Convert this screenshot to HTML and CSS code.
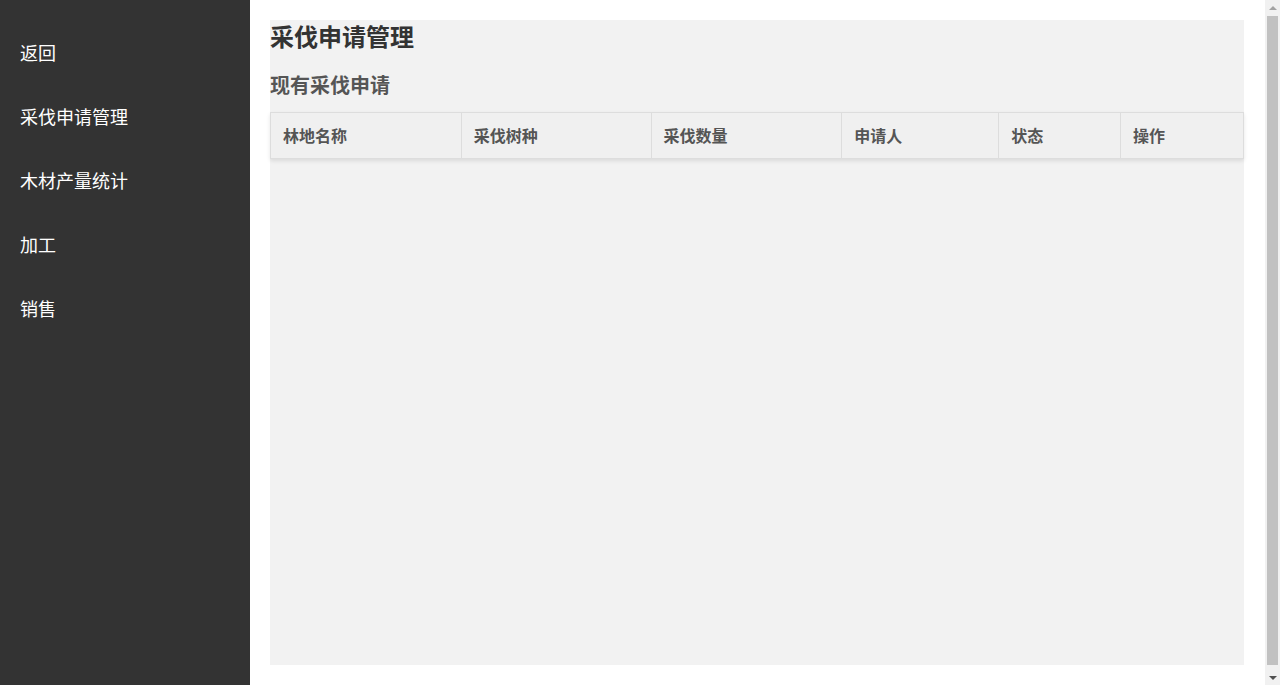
FILE: index.html
```html
<!DOCTYPE html>
<html>
<head>
    <meta charset="utf-8">
    <title>采伐申请管理</title>
    <link rel="stylesheet" href="styles.css">
</head>
<body>
    <div class="layout">
        <div class="sidebar">
            <a class="nav-item" href="#">返回</a>
            <a class="nav-item" href="#">采伐申请管理</a>
            <a class="nav-item" href="#">木材产量统计</a>
            <a class="nav-item" href="#">加工</a>
            <a class="nav-item" href="#">销售</a>
        </div>
        <div class="main">
            <div class="panel">
                <h1 class="page-title">采伐申请管理</h1>
                <h2 class="section-title">现有采伐申请</h2>
                <table class="apply-table">
                    <thead>
                        <tr>
                            <th class="col-forest">林地名称</th>
                            <th class="col-tree">采伐树种</th>
                            <th class="col-amount">采伐数量</th>
                            <th class="col-user">申请人</th>
                            <th class="col-status">状态</th>
                            <th class="col-action">操作</th>
                        </tr>
                    </thead>
                    <tbody id="apply-list">
                        <!-- rows are loaded here -->
                    </tbody>
                </table>
            </div>
        </div>
        <!-- page scrollbar -->
        <div class="scrollbar">
            <div class="scroll-btn"><span class="arrow-up"></span></div>
            <div class="scroll-track"><div class="scroll-thumb"></div></div>
            <div class="scroll-btn"><span class="arrow-down"></span></div>
        </div>
    </div>
</body>
</html>
```

FILE: styles.css
```css
body {
    font-family: "Noto Sans CJK SC", "Liberation Sans", sans-serif;
    margin: 0;
    padding: 0;
    background-color: #fff;
    overflow: hidden;
}

.layout {
    display: flex;
    height: 100vh;
}

.sidebar {
    width: 250px;
    flex-shrink: 0;
    background-color: #333;
    padding-top: 20px;
    display: flex;
    flex-direction: column;
}

.nav-item {
    display: block;
    color: #fff;
    text-decoration: none;
    font-size: 18px;
    line-height: 24px;
    padding: 20px;
}

.main {
    flex-grow: 1;
    padding: 20px 21px 20px 20px;
}

.panel {
    background-color: #f2f2f2;
    height: 100%;
}

.page-title {
    margin: 0;
    font-size: 24px;
    line-height: 32px;
    color: #333;
}

.section-title {
    margin: 19px 0 13px 0;
    font-size: 20px;
    line-height: 28px;
    color: #555;
}

.apply-table {
    width: 100%;
    border-collapse: collapse;
    box-shadow: 0 2px 4px rgba(0, 0, 0, 0.1);
}

.apply-table th {
    box-sizing: border-box;
    background-color: #f0f0f0;
    border: 1px solid #ddd;
    color: #555;
    font-size: 16px;
    line-height: 21px;
    padding: 12px;
    text-align: left;
}

.col-forest { width: 191px; }
.col-tree { width: 190px; }
.col-amount { width: 191px; }
.col-user { width: 157px; }
.col-status { width: 122px; }
.col-action { width: 123px; }

.scrollbar {
    width: 15px;
    flex-shrink: 0;
    background-color: #f1f1f1;
    display: flex;
    flex-direction: column;
}

.scroll-btn {
    height: 15px;
    display: flex;
    justify-content: center;
    align-items: center;
}

.arrow-up {
    border-left: 4px solid transparent;
    border-right: 4px solid transparent;
    border-bottom: 4px solid #a3a3a3;
}

.arrow-down {
    border-left: 4px solid transparent;
    border-right: 4px solid transparent;
    border-top: 4px solid #505050;
}

.scroll-track {
    flex-grow: 1;
    padding: 1px 2px 5px 2px;
    display: flex;
}

.scroll-thumb {
    flex-grow: 1;
    background-color: #c1c1c1;
}
```
